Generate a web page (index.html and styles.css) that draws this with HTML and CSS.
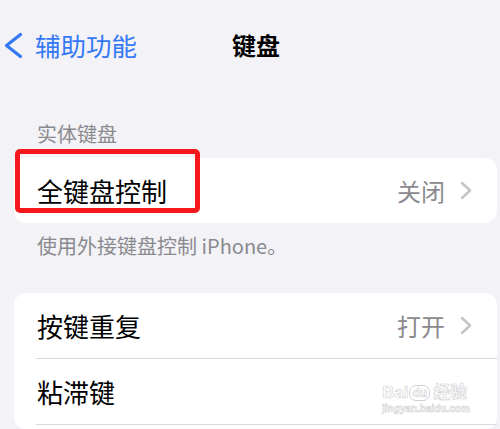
FILE: index.html
```html
<!DOCTYPE html>
<html>
  <head>
    <meta charset="UTF-8" />
    <title>键盘</title>
    <link rel="stylesheet" href="styles.css">
  </head>
  <body>
    <div class="nav">
      <div class="nav-back">
        <svg class="back-icon" width="24" height="31" viewBox="0 0 24 31">
          <path d="M20.5 4.5 L6.5 15.5 L20.5 26.5" />
        </svg>
        <span>辅助功能</span>
      </div>
      <div class="nav-title">键盘</div>
      <div></div>
    </div>

    <div class="group-header">实体键盘</div>
    <div class="card">
      <div class="row">
        <span class="row-label">全键盘控制</span>
        <span class="row-value">关闭</span>
        <svg class="chevron" width="12" height="19" viewBox="0 0 12 19">
          <path d="M2 2 L10 9.5 L2 17" />
        </svg>
      </div>
      <div class="mark"></div>
    </div>
    <div class="group-footer">使用外接键盘控制 iPhone。</div>

    <div class="card card-second">
      <div class="row">
        <span class="row-label">按键重复</span>
        <span class="row-value">打开</span>
        <svg class="chevron" width="12" height="19" viewBox="0 0 12 19">
          <path d="M2 2 L10 9.5 L2 17" />
        </svg>
      </div>
      <div class="row">
        <span class="row-label">粘滞键</span>
      </div>
      <div class="row row-cut"></div>
    </div>

    <div class="watermark">
      <div class="wm-logo">Bai<span class="wm-du">du</span>经验</div>
      <div class="wm-url">jingyan.baidu.com</div>
    </div>
  </body>
</html>
```

FILE: styles.css
```css
body {
  font-family: "Noto Sans CJK SC", "Liberation Sans", sans-serif;
  background-color: #f2f2f7;
  margin: 0;
  padding: 0;
  width: 500px;
  height: 429px;
  overflow: hidden;
  position: relative;
  color: #000;
}

/* 상단 내비게이션 */
.nav {
  display: grid;
  grid-template-columns: 1fr auto 1fr;
  align-items: center;
  height: 50px;
  margin-top: 20px;
}

.nav-back {
  display: flex;
  align-items: center;
  color: #3478f6;
  font-size: 25.5px;
  line-height: 28px;
}

.nav-back span {
  margin-left: 11px;
}

.back-icon path {
  fill: none;
  stroke: #3478f6;
  stroke-width: 3.2;
  stroke-linecap: round;
  stroke-linejoin: round;
}

.nav-title {
  margin-left: 12px;
  font-size: 24px;
  font-weight: bold;
  line-height: 28px;
}

.group-header {
  margin-top: 50px;
  padding-left: 37px;
  font-size: 20px;
  line-height: 28px;
  color: #8a8a8e;
}

.card {
  position: relative;
  background-color: #ffffff;
  border-radius: 12px;
  margin: 10px 3px 0 14px;
}

.card-second {
  margin-top: 33px;
}

.row {
  display: flex;
  align-items: center;
  height: 65px;
  padding: 0 25px 0 23px;
}

.card-second .row + .row {
  border-top: 1px solid #d9d9dd;
  margin-left: 22px;
  padding-left: 1px;
}

.card-second .row-cut {
  height: 4px;
}

.row-label {
  flex: 1;
  font-size: 26px;
  line-height: 30px;
}

.row-value {
  font-size: 24px;
  line-height: 30px;
  color: #8a8a8e;
  margin-right: 15px;
}

.chevron path {
  fill: none;
  stroke: #c4c4c7;
  stroke-width: 2.5;
  stroke-linecap: round;
  stroke-linejoin: round;
}

/* 빨간 표시 상자 */
.mark {
  position: absolute;
  left: 1px;
  top: -9px;
  width: 175px;
  height: 54px;
  border: 5px solid #f5191d;
  border-radius: 5px;
}

.group-footer {
  margin-top: 9px;
  padding-left: 37px;
  font-size: 20px;
  line-height: 28px;
  color: #8a8a8e;
}

/* 워터마크 */
.watermark {
  position: absolute;
  left: 382px;
  top: 383px;
  color: #ffffff;
  -webkit-text-stroke: 0.6px #d0d0d4;
  font-family: "Liberation Sans", "Noto Sans CJK SC", sans-serif;
  font-weight: bold;
}

.wm-logo {
  font-size: 17px;
  line-height: 20px;
  display: flex;
  align-items: center;
}

.wm-du {
  font-size: 12px;
  line-height: 14px;
  border: 1px solid #d0d0d4;
  border-radius: 7px;
  padding: 0 2px;
  margin: 0 3px 0 1px;
}

.wm-url {
  font-size: 10px;
  line-height: 12px;
}
```
